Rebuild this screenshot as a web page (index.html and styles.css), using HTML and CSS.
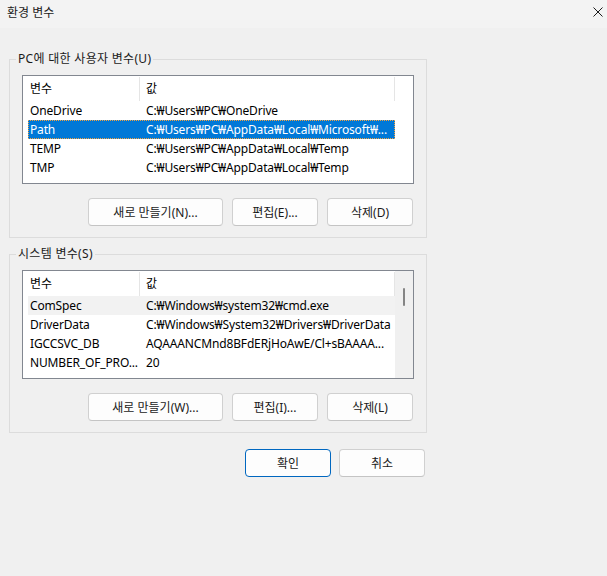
FILE: index.html
```html
<!DOCTYPE html>
<html lang="ko">
<head>
  <meta charset="UTF-8">
  <meta name="viewport" content="width=device-width, initial-scale=1.0">
  <title>환경 변수</title>
  <link rel="stylesheet" href="styles.css">
</head>
<body>
  <div class="titlebar">
    <span class="title">환경 변수</span>
    <svg class="close" width="10" height="10" viewBox="0 0 10 10">
      <path d="M0.5 0.5 L9.5 9.5 M9.5 0.5 L0.5 9.5" stroke="#1b1b1b" stroke-width="1" fill="none"/>
    </svg>
  </div>

  <div class="dialog">
    <fieldset class="group">
      <legend>PC에 대한 사용자 변수(U)</legend>
      <div class="list">
        <div class="list-body">
          <div class="header">
            <div class="hcell name">변수</div>
            <div class="hcell value">값</div>
          </div>
          <div class="row"><span>OneDrive</span><span>C:₩Users₩PC₩OneDrive</span></div>
          <div class="row selected"><span>Path</span><span>C:₩Users₩PC₩AppData₩Local₩Microsoft₩...</span></div>
          <div class="row"><span>TEMP</span><span>C:₩Users₩PC₩AppData₩Local₩Temp</span></div>
          <div class="row"><span>TMP</span><span>C:₩Users₩PC₩AppData₩Local₩Temp</span></div>
        </div>
      </div>
      <div class="buttons">
        <button class="btn wide">새로 만들기(N)...</button>
        <button class="btn">편집(E)...</button>
        <button class="btn">삭제(D)</button>
      </div>
    </fieldset>

    <fieldset class="group second">
      <legend>시스템 변수(S)</legend>
      <div class="list">
        <div class="list-body">
          <div class="header">
            <div class="hcell name">변수</div>
            <div class="hcell value">값</div>
          </div>
          <div class="row hover"><span>ComSpec</span><span>C:₩Windows₩system32₩cmd.exe</span></div>
          <div class="row"><span>DriverData</span><span>C:₩Windows₩System32₩Drivers₩DriverData</span></div>
          <div class="row"><span>IGCCSVC_DB</span><span>AQAAANCMnd8BFdERjHoAwE/Cl+sBAAAA...</span></div>
          <div class="row"><span>NUMBER_OF_PRO...</span><span>20</span></div>
        </div>
        <div class="scrollbar"><div class="thumb"></div></div>
      </div>
      <div class="buttons">
        <button class="btn wide">새로 만들기(W)...</button>
        <button class="btn">편집(I)...</button>
        <button class="btn">삭제(L)</button>
      </div>
    </fieldset>

    <div class="footer">
      <button class="btn primary">확인</button>
      <button class="btn">취소</button>
    </div>
  </div>
</body>
</html>
```

FILE: styles.css
```css
html {
  background: #f0f0f0;
}
body {
  margin: 0;
  width: 607px;
  height: 576px;
  background: #f0f0f0;
  font-family: "Noto Sans", "Noto Sans CJK KR", sans-serif;
  font-size: 12px;
  color: #000;
  overflow: hidden;
}
.titlebar {
  display: flex;
  justify-content: space-between;
  align-items: flex-start;
  height: 28px;
  padding: 0 4px 0 7px;
  background: #f3f3f3;
}
.title {
  line-height: 26px;
  color: #1a1a1a;
}
.close {
  margin-top: 7px;
}
.dialog {
  width: 418px;
  padding: 23px 0 0 9px;
}
.group {
  margin: 0;
  min-width: 0;
  border: 1px solid #dcdcdc;
  padding: 8px 12px 11px 12px;
}
.group.second {
  margin-top: 8px;
}
.group legend {
  padding: 0 2px;
  margin-left: -6px;
  line-height: 16px;
  color: #1a1a1a;
  letter-spacing: 0.3px;
}
.list {
  display: flex;
  height: 109px;
  box-sizing: border-box;
  border: 1px solid #828790;
  background: #fff;
  overflow: hidden;
}
.list-body {
  flex: 1;
  overflow: hidden;
}
.header {
  display: flex;
  height: 25px;
  padding-top: 1px;
  box-sizing: border-box;
}
.hcell {
  box-sizing: border-box;
  line-height: 24px;
  border-right: 1px solid #e5e5e5;
  white-space: nowrap;
}
.hcell.name {
  width: 117px;
  padding-left: 7px;
}
.hcell.value {
  width: 255px;
  padding-left: 6px;
}
.row {
  display: grid;
  grid-template-columns: 111px 1fr;
  width: 367px;
  height: 19px;
  margin-left: 5px;
  line-height: 19px;
  box-sizing: border-box;
  white-space: nowrap;
  letter-spacing: -0.15px;
}
.row span {
  overflow: hidden;
  padding-left: 2px;
}
.row span + span {
  padding-left: 7px;
}
.row.selected {
  background: #0078d7;
  color: #fff;
  outline: 1px dotted #f4a340;
  outline-offset: -1px;
}
.row.hover {
  background: #f2f2f2;
}
.scrollbar {
  width: 18px;
  background: #f0f0f0;
  padding-top: 17px;
  box-sizing: border-box;
}
.thumb {
  width: 2px;
  height: 18px;
  margin-left: 8px;
  border-radius: 1px;
  background: #858585;
}
.buttons {
  display: flex;
  justify-content: flex-end;
  gap: 9px;
  margin-top: 14px;
  padding-right: 1px;
}
.btn {
  width: 86px;
  height: 28px;
  padding: 0;
  border: 1px solid #d0d0d0;
  border-bottom-color: #c4c4c4;
  border-radius: 4px;
  background: #fdfdfd;
  font-family: inherit;
  font-size: 12px;
  color: #1a1a1a;
}
.btn.wide {
  width: 135px;
}
.btn.primary {
  border-color: #0067c0;
}
.footer {
  display: flex;
  justify-content: flex-end;
  gap: 8px;
  margin-top: 16px;
  padding-right: 2px;
}
```
